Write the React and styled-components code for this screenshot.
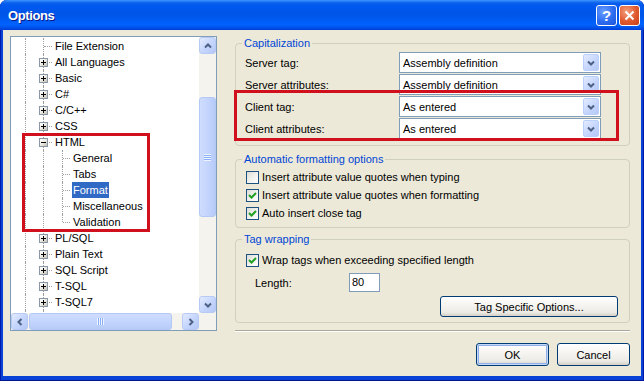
import React from 'react'
import styled, { createGlobalStyle } from 'styled-components'

const GlobalStyle = createGlobalStyle`
  html, body {
    margin: 0;
    padding: 0;
    background: #ffffff;
  }
  body {
    font-family: "Liberation Sans", Arial, sans-serif;
    font-size: 11px;
    color: #000;
  }
`

const treeRows = [
  { label: 'File Extension', level: 1, kind: 'leaf' },
  { label: 'All Languages', level: 1, kind: 'plus' },
  { label: 'Basic', level: 1, kind: 'plus' },
  { label: 'C#', level: 1, kind: 'plus' },
  { label: 'C/C++', level: 1, kind: 'plus' },
  { label: 'CSS', level: 1, kind: 'plus' },
  { label: 'HTML', level: 1, kind: 'minus' },
  { label: 'General', level: 2 },
  { label: 'Tabs', level: 2 },
  { label: 'Format', level: 2, selected: true },
  { label: 'Miscellaneous', level: 2 },
  { label: 'Validation', level: 2, last: true },
  { label: 'PL/SQL', level: 1, kind: 'plus' },
  { label: 'Plain Text', level: 1, kind: 'plus' },
  { label: 'SQL Script', level: 1, kind: 'plus' },
  { label: 'T-SQL', level: 1, kind: 'plus' },
  { label: 'T-SQL7', level: 1, kind: 'plus' },
  { filler: true },
]

const capRows = [
  { label: 'Server tag:', value: 'Assembly definition' },
  { label: 'Server attributes:', value: 'Assembly definition' },
  { label: 'Client tag:', value: 'As entered' },
  { label: 'Client attributes:', value: 'As entered' },
]

const formatChecks = [
  { label: 'Insert attribute value quotes when typing', checked: false },
  { label: 'Insert attribute value quotes when formatting', checked: true },
  { label: 'Auto insert close tag', checked: true },
]

function Chevron({ dir = 'down' }) {
  const paths = {
    down: 'M1 1.5 L4 4.5 L7 1.5',
    up: 'M1 4.5 L4 1.5 L7 4.5',
    left: 'M4.5 1 L1.5 4 L4.5 7',
    right: 'M1.5 1 L4.5 4 L1.5 7',
  }
  const horiz = dir === 'left' || dir === 'right'
  return (
    <svg width={horiz ? 6 : 8} height={horiz ? 8 : 6} viewBox={horiz ? '0 0 6 8' : '0 0 8 6'}>
      <path d={paths[dir]} fill="none" stroke="#4D6185" strokeWidth="2" />
    </svg>
  )
}

function CheckBox({ checked }) {
  return (
    <Box>
      {checked && (
        <svg width="9" height="9" viewBox="0 0 9 9">
          <path d="M1 4 L3.5 6.5 L8 2" fill="none" stroke="#21A121" strokeWidth="2" />
        </svg>
      )}
    </Box>
  )
}

function TreeRow({ row }) {
  if (row.filler) {
    return (
      <Row>
        <Guide $v="full" />
        <Guide $v="full" />
      </Row>
    )
  }
  if (row.level === 2) {
    return (
      <Row>
        <Guide $v="full" />
        <Guide $v="full" />
        <Guide $v={row.last ? 'top' : 'full'} $h $at={10} />
        <Label $selected={row.selected}>{row.label}</Label>
      </Row>
    )
  }
  return (
    <Row>
      <Guide $v="full" />
      <Guide $v="full" $h>
        {row.kind !== 'leaf' && <Expander $plus={row.kind === 'plus'} />}
      </Guide>
      <Label>{row.label}</Label>
    </Row>
  )
}

export default function App() {
  return (
    <>
      <GlobalStyle />
      <Window>
        <TitleBar>
          <Title>Options</Title>
          <CaptionButtons>
            <HelpButton>?</HelpButton>
            <CloseButton>
              <svg width="11" height="11" viewBox="0 0 11 11">
                <path d="M1.5 1.5 L9.5 9.5 M9.5 1.5 L1.5 9.5" stroke="#fff" strokeWidth="2" />
              </svg>
            </CloseButton>
          </CaptionButtons>
        </TitleBar>

        <Body>
          <Tree>
            <TreeContent>
              {treeRows.map((row, i) => (
                <TreeRow key={i} row={row} />
              ))}
            </TreeContent>
            <VScroll>
              <ScrollButton><Chevron dir="up" /></ScrollButton>
              <Track $vertical>
                <Thumb $vertical>
                  <Grip $vertical />
                </Thumb>
              </Track>
              <ScrollButton><Chevron dir="down" /></ScrollButton>
            </VScroll>
            <HScroll>
              <ScrollButton><Chevron dir="left" /></ScrollButton>
              <Track>
                <Thumb>
                  <Grip />
                </Thumb>
              </Track>
              <ScrollButton><Chevron dir="right" /></ScrollButton>
            </HScroll>
            <Corner />
          </Tree>

          <RightColumn>
            <GroupBox $padBottom={6}>
              <GroupTitle>Capitalization</GroupTitle>
              <CapGrid>
                {capRows.map((r) => (
                  <React.Fragment key={r.label}>
                    <FieldLabel>{r.label}</FieldLabel>
                    <Combo>
                      <ComboText>{r.value}</ComboText>
                      <DropButton><Chevron dir="down" /></DropButton>
                    </Combo>
                  </React.Fragment>
                ))}
              </CapGrid>
            </GroupBox>

            <GroupBox $gap={13} $padBottom={5}>
              <GroupTitle>Automatic formatting options</GroupTitle>
              <CheckList>
                {formatChecks.map((c) => (
                  <CheckRow key={c.label}>
                    <CheckBox checked={c.checked} />
                    {c.label}
                  </CheckRow>
                ))}
              </CheckList>
            </GroupBox>

            <GroupBox $gap={11} $padBottom={5}>
              <GroupTitle>Tag wrapping</GroupTitle>
              <WrapRow>
                <CheckBox checked />
                Wrap tags when exceeding specified length
              </WrapRow>
              <LengthRow>
                <LengthLabel>Length:</LengthLabel>
                <NumberBox>80</NumberBox>
              </LengthRow>
              <OptionsRow>
                <XPButton $w={178} $h={21}>Tag Specific Options...</XPButton>
              </OptionsRow>
            </GroupBox>

            <Separator />

            <DialogButtons>
              <XPButton $w={73} $h={23} $default>OK</XPButton>
              <XPButton $w={73} $h={23}>Cancel</XPButton>
            </DialogButtons>
          </RightColumn>
        </Body>

        <Annotation $left={22} $top={133} $w={128} $h={99} />
        <Annotation $left={234} $top={90} $w={385} $h={51} />
      </Window>
    </>
  )
}

const Window = styled.div`
  position: relative;
  width: 644px;
  height: 381px;
  display: flex;
  flex-direction: column;
  background: #0842D6;
  border-radius: 7px 7px 0 0;
  overflow: hidden;
  box-shadow: inset 1px 0 0 #0019A8, inset -1px 0 0 #0019A8, inset 0 -1px 0 #00138C;
`

const TitleBar = styled.div`
  height: 30px;
  flex: none;
  display: flex;
  align-items: center;
  padding: 0 4px 0 8px;
  box-sizing: border-box;
  background: linear-gradient(180deg, #3D95FF 0px, #0A5FEC 3px, #0058EE 6px, #0055E8 50%, #0062FF 82%, #0052EA 92%, #003DD7 100%);
`

const Title = styled.div`
  flex: 1;
  color: #fff;
  font-family: "Liberation Sans", Arial, sans-serif;
  font-weight: bold;
  font-size: 13px;
  letter-spacing: -0.4px;
  text-shadow: 1px 1px 0 #0A1883;
  padding-top: 1px;
`

const CaptionButtons = styled.div`
  display: flex;
  gap: 2px;
  margin-top: 1px;
`

const HelpButton = styled.div`
  width: 21px;
  height: 21px;
  box-sizing: border-box;
  border: 1px solid #fff;
  border-radius: 3px;
  background: radial-gradient(circle at 35% 30%, #6A9EFF 0%, #2C6CF0 55%, #1E55D8 100%);
  color: #fff;
  font-family: "Liberation Sans", Arial, sans-serif;
  font-weight: bold;
  font-size: 15px;
  display: flex;
  align-items: center;
  justify-content: center;
`

const CloseButton = styled(HelpButton)`
  background: radial-gradient(circle at 35% 30%, #F3A07F 0%, #E0582D 55%, #C8401A 100%);
`

const Body = styled.div`
  flex: 1;
  margin: 0 3px 5px 3px;
  background: #ECE9D8;
  display: flex;
  align-items: flex-start;
  padding: 6px 11px 0 7px;
  box-sizing: border-box;
`

const Tree = styled.div`
  width: 207px;
  height: 295px;
  flex: none;
  box-sizing: border-box;
  border: 1px solid #7F9DB9;
  background: #fff;
  display: grid;
  grid-template-columns: 188px 17px;
  grid-template-rows: 276px 17px;
`

const TreeContent = styled.div`
  overflow: hidden;
  padding-top: 1px;
`

const Row = styled.div`
  height: 16px;
  display: flex;
  align-items: center;
  padding-left: 5px;
  white-space: nowrap;
`

const Guide = styled.div`
  position: relative;
  width: 18px;
  height: 16px;
  flex: none;

  &::before {
    content: '';
    display: ${(p) => (p.$v ? 'block' : 'none')};
    position: absolute;
    left: ${(p) => p.$at || 9}px;
    top: 0;
    height: ${(p) => (p.$v === 'top' ? 8 : 16)}px;
    border-left: 1px dotted #A0A0A0;
  }

  &::after {
    content: '';
    display: ${(p) => (p.$h ? 'block' : 'none')};
    position: absolute;
    left: ${(p) => (p.$at || 9) + 1}px;
    right: 0;
    top: 8px;
    border-top: 1px dotted #A0A0A0;
  }
`

const Expander = styled.div`
  position: absolute;
  left: 5px;
  top: 4px;
  width: 9px;
  height: 9px;
  box-sizing: border-box;
  border: 1px solid #8C97A6;
  background: linear-gradient(135deg, #ffffff 0%, #EFEEE8 45%, #C2BFB0 100%);
  z-index: 1;

  &::before {
    content: '';
    position: absolute;
    left: 1px;
    top: 3px;
    width: 5px;
    height: 1px;
    background: #000;
  }

  &::after {
    content: '';
    display: ${(p) => (p.$plus ? 'block' : 'none')};
    position: absolute;
    left: 3px;
    top: 1px;
    width: 1px;
    height: 5px;
    background: #000;
  }
`

const Label = styled.span`
  margin-left: 2px;
  padding: 0 1px;
  height: 16px;
  line-height: 16px;
  background: ${(p) => (p.$selected ? '#316AC5' : 'transparent')};
  color: ${(p) => (p.$selected ? '#fff' : '#000')};
`

const VScroll = styled.div`
  display: flex;
  flex-direction: column;
  background: #F4F3EE;
`

const HScroll = styled.div`
  display: flex;
  background: #F4F3EE;
`

const Corner = styled.div`
  background: #F4F3EE;
`

const ScrollButton = styled.div`
  width: 17px;
  height: 17px;
  flex: none;
  box-sizing: border-box;
  border: 1px solid #B7CAF5;
  border-radius: 3px;
  background: linear-gradient(135deg, #E3EBFE 0%, #C6D6FD 50%, #B4C8F6 100%);
  display: flex;
  align-items: center;
  justify-content: center;
`

const Track = styled.div`
  flex: 1;
  display: flex;
  flex-direction: ${(p) => (p.$vertical ? 'column' : 'row')};
`

const Thumb = styled.div`
  box-sizing: border-box;
  border: 1px solid #B3C8F5;
  border-radius: 3px;
  background: ${(p) =>
    p.$vertical
      ? 'linear-gradient(90deg, #CFDCFD 0%, #C4D5FD 50%, #B6CBF8 100%)'
      : 'linear-gradient(180deg, #CFDCFD 0%, #C4D5FD 50%, #B6CBF8 100%)'};
  margin: ${(p) => (p.$vertical ? '43px 0 0 0' : '0 0 0 1px')};
  width: ${(p) => (p.$vertical ? '17px' : '143px')};
  height: ${(p) => (p.$vertical ? '120px' : '17px')};
  display: flex;
  align-items: center;
  justify-content: center;
`

const Grip = styled.div`
  width: 7px;
  height: 7px;
  background: ${(p) =>
    p.$vertical
      ? 'repeating-linear-gradient(180deg, #EEF4FE 0 1px, #8CB0F8 1px 2px)'
      : 'repeating-linear-gradient(90deg, #EEF4FE 0 1px, #8CB0F8 1px 2px)'};
`

const RightColumn = styled.div`
  width: 395px;
  margin-left: 18px;
  padding-top: 7px;
  display: flex;
  flex-direction: column;
`

const GroupBox = styled.div`
  border: 1px solid #D0D0BF;
  border-radius: 4px;
  margin-top: ${(p) => p.$gap || 0}px;
  padding: 0 0 ${(p) => p.$padBottom || 0}px 0;
`

const GroupTitle = styled.div`
  width: fit-content;
  margin: -7px 0 0 6px;
  padding: 0 2px;
  height: 13px;
  line-height: 13px;
  background: #ECE9D8;
  color: #0046D5;
`

const CapGrid = styled.div`
  display: grid;
  grid-template-columns: 154px 202px;
  grid-auto-rows: 21px;
  row-gap: 1px;
  margin: 2px 0 0 9px;
  align-items: center;
`

const FieldLabel = styled.div``

const Combo = styled.div`
  height: 21px;
  box-sizing: border-box;
  border: 1px solid #7F9DB9;
  background: #fff;
  display: flex;
  align-items: center;
  padding-left: 3px;
`

const ComboText = styled.span`
  flex: 1;
`

const DropButton = styled.span`
  width: 16px;
  height: 17px;
  margin-right: 1px;
  box-sizing: border-box;
  border: 1px solid #BAD0FC;
  border-radius: 2px;
  background: linear-gradient(135deg, #E3EBFE 0%, #C6D6FD 55%, #B4C8F6 100%);
  display: flex;
  align-items: center;
  justify-content: center;
`

const CheckList = styled.div`
  margin: 2px 0 0 10px;
  display: flex;
  flex-direction: column;
`

const CheckRow = styled.div`
  height: 18px;
  display: flex;
  align-items: center;
  gap: 3px;
`

const Box = styled.span`
  width: 13px;
  height: 13px;
  box-sizing: border-box;
  border: 1px solid #1C5180;
  background: linear-gradient(135deg, #DCDCD7 0%, #F2F2EF 55%, #ffffff 100%);
  display: flex;
  align-items: center;
  justify-content: center;
`

const WrapRow = styled(CheckRow)`
  margin: 5px 0 0 10px;
`

const LengthRow = styled.div`
  margin: 4px 0 0 19px;
  display: flex;
  align-items: center;
  height: 19px;
`

const LengthLabel = styled.span`
  width: 94px;
`

const NumberBox = styled.div`
  width: 31px;
  height: 19px;
  box-sizing: border-box;
  border: 1px solid #7F9DB9;
  background: #fff;
  padding-left: 2px;
  line-height: 17px;
`

const OptionsRow = styled.div`
  display: flex;
  justify-content: flex-end;
  margin: 4px 11px 0 0;
`

const XPButton = styled.div`
  width: ${(p) => p.$w}px;
  height: ${(p) => p.$h}px;
  box-sizing: border-box;
  border: 1px solid #003C74;
  border-radius: 3px;
  background: linear-gradient(180deg, #FFFFFF 0%, #F6F5F1 40%, #ECEBE6 80%, #D6D0C5 100%);
  box-shadow: ${(p) => (p.$default ? 'inset 0 0 0 1px #C7D8F7, inset 0 0 0 2px #8EAFEA' : 'none')};
  display: flex;
  align-items: center;
  justify-content: center;
`

const Separator = styled.div`
  margin-top: 7px;
  height: 0;
  border-top: 1px solid #ACA899;
  border-bottom: 1px solid #FFFFFF;
`

const DialogButtons = styled.div`
  display: flex;
  justify-content: flex-end;
  gap: 8px;
  margin-top: 11px;
`

const Annotation = styled.div`
  position: absolute;
  left: ${(p) => p.$left}px;
  top: ${(p) => p.$top}px;
  width: ${(p) => p.$w}px;
  height: ${(p) => p.$h}px;
  box-sizing: border-box;
  border: 3px solid #D0101C;
  pointer-events: none;
`
